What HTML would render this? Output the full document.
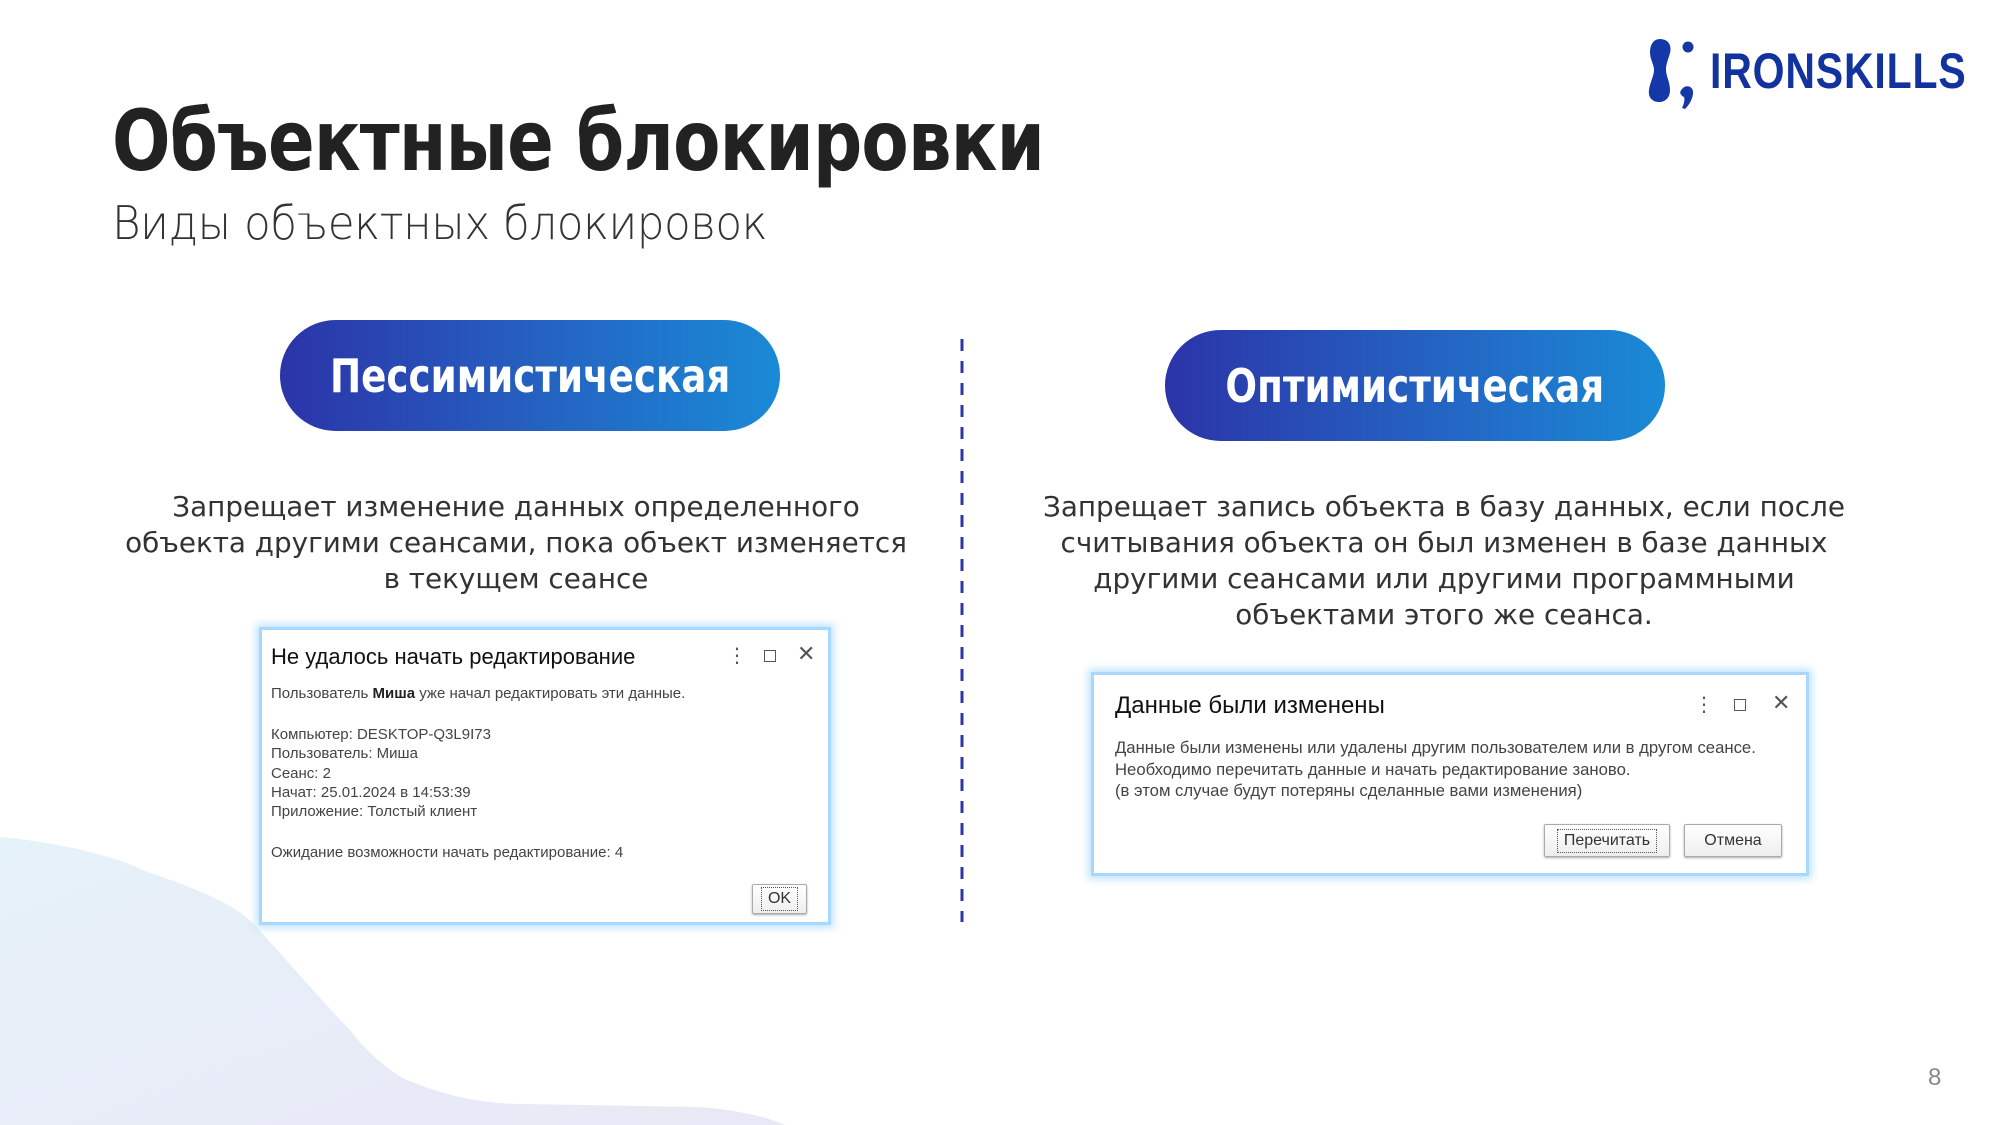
<!DOCTYPE html>
<html><head><meta charset="utf-8"><style>
body{margin:0;width:2000px;height:1125px;position:relative;overflow:hidden;background:#fff;font-family:"Liberation Sans","DejaVu Sans",sans-serif;}
.abs{position:absolute;}
.title{left:112px;top:92px;font-size:84px;font-weight:bold;color:#222;font-family:"DejaVu Sans","Liberation Sans",sans-serif;letter-spacing:-1px;white-space:nowrap;transform:scaleX(0.82);transform-origin:0 0}
.sub{left:112px;top:196px;font-size:46px;color:#333;font-family:"DejaVu Sans","Liberation Sans",sans-serif;font-weight:300;white-space:nowrap;letter-spacing:-0.5px;transform:scaleX(0.95);transform-origin:0 0}
.pill{height:111px;width:500px;border-radius:56px;background:linear-gradient(90deg,#2b34a8,#2560c0 50%,#1a8ad6);color:#fff;font-weight:bold;font-size:46px;font-family:"DejaVu Sans","Liberation Sans",sans-serif;display:flex;align-items:center;justify-content:center;}
.pill span{display:inline-block;transform:scaleX(0.81);white-space:nowrap}
.para{font-size:27.8px;color:#333;text-align:center;line-height:36px;font-family:"DejaVu Sans","Liberation Sans",sans-serif;white-space:nowrap;}
.dlg{background:#fff;border:3px solid #a8d8fb;box-shadow:0 0 8px 3px #bfe3fc;}
.dt{font-size:22px;color:#111;position:absolute;}
.db{font-size:15px;color:#444;position:absolute;line-height:19.3px;white-space:nowrap}
.ic{position:absolute;color:#555;font-size:20px;line-height:20px}
.btn{position:absolute;border:1px solid #aaa;border-radius:2px;background:linear-gradient(#fff,#eee);box-shadow:0 1px 2px #aaa;font-size:16px;color:#333;display:flex;align-items:center;justify-content:center}
.btn span{border:1px dotted #555;padding:2px 6px}
</style></head><body>
<svg class="abs" style="left:0;top:0" width="2000" height="1125">
<defs><linearGradient id="g" x1="0" y1="0" x2="1" y2="1"><stop offset="0" stop-color="#e6f2f9"/><stop offset="1" stop-color="#e9e8f6"/></linearGradient></defs>
<path d="M0 837 C60 842 120 858 145 871 C200 890 240 905 261 932 C300 975 330 1010 349 1029 C370 1055 390 1072 407 1080 C450 1098 490 1104 523 1104 L698 1107 C740 1110 770 1118 785 1125 L0 1125 Z" fill="url(#g)"/>
<line x1="962" y1="339" x2="962" y2="922" stroke="#2b36a8" stroke-width="3" stroke-dasharray="12 10"/>
</svg>
<div class="abs title">Объектные блокировки</div>
<div class="abs sub">Виды объектных блокировок</div>
<svg class="abs" style="left:1648px;top:36px" width="50" height="74" viewBox="0 0 50 74">
<path d="M12 3 C20 3 24 9 22 17 C20 24 18 28 18 34 C18 40 22 46 22 54 C22 62 17 66 11 66 C4 66 0 61 1 54 C2 46 6 40 6 34 C6 28 2 24 2 16 C2 8 6 3 12 3Z" fill="#1438a8"/>
<circle cx="40" cy="11" r="5.5" fill="#1438a8"/>
<path d="M34 53 C38 48 46 50 45 58 C44 65 40 70 37 73 L34 72 C36 68 37 64 36 61 C32 59 31 56 34 53Z" fill="#1438a8"/>
</svg>
<div class="abs" style="left:1710px;top:42px;font-size:50px;font-weight:bold;color:#12329e;letter-spacing:1px;font-family:'Liberation Sans',sans-serif;transform:scaleX(0.82);transform-origin:0 0;white-space:nowrap">IRONSKILLS</div>

<div class="abs pill" style="left:280px;top:320px"><span>Пессимистическая</span></div>
<div class="abs pill" style="left:1165px;top:330px"><span>Оптимистическая</span></div>

<div class="abs para" style="left:116px;width:800px;top:489px">Запрещает изменение данных определенного<br>объекта другими сеансами, пока объект изменяется<br>в текущем сеансе</div>
<div class="abs para" style="left:1004px;width:880px;top:489px">Запрещает запись объекта в базу данных, если после<br>считывания объекта он был изменен в базе данных<br>другими сеансами или другими программными<br>объектами этого же сеанса.</div>

<div class="abs dlg" style="left:259px;top:627px;width:566px;height:292px">
<div class="dt" style="left:9px;top:14px">Не удалось начать редактирование</div>
<div class="ic" style="left:465px;top:16px">⋮</div>
<div class="abs" style="left:502px;top:20px;width:10px;height:10px;border:1.5px solid #555"></div>
<div class="ic" style="left:535px;top:14px;font-size:22px">✕</div>
<div class="db" style="left:9px;top:54px">Пользователь <b style="color:#222">Миша</b> уже начал редактировать эти данные.</div>
<div class="db" style="left:9px;top:95px">Компьютер: DESKTOP-Q3L9I73<br>Пользователь: Миша<br>Сеанс: 2<br>Начат: 25.01.2024 в 14:53:39<br>Приложение: Толстый клиент</div>
<div class="db" style="left:9px;top:213px">Ожидание возможности начать редактирование: 4</div>
<div class="btn" style="left:490px;top:254px;width:53px;height:28px"><span>OK</span></div>
</div>

<div class="abs dlg" style="left:1091px;top:672px;width:712px;height:198px">
<div class="dt" style="left:21px;top:17px;font-size:24px">Данные были изменены</div>
<div class="ic" style="left:600px;top:20px">⋮</div>
<div class="abs" style="left:640px;top:24px;width:10px;height:10px;border:1.5px solid #555"></div>
<div class="ic" style="left:678px;top:18px;font-size:22px">✕</div>
<div class="db" style="left:21px;top:62px;font-size:16.7px;line-height:21.5px">Данные были изменены или удалены другим пользователем или в другом сеансе.<br>Необходимо перечитать данные и начать редактирование заново.<br>(в этом случае будут потеряны сделанные вами изменения)</div>
<div class="btn" style="left:450px;top:149px;width:124px;height:31px"><span>Перечитать</span></div>
<div class="btn" style="left:590px;top:149px;width:96px;height:31px">Отмена</div>
</div>

<div class="abs" style="left:1928px;top:1064px;font-size:24px;color:#888">8</div>
</body></html>
